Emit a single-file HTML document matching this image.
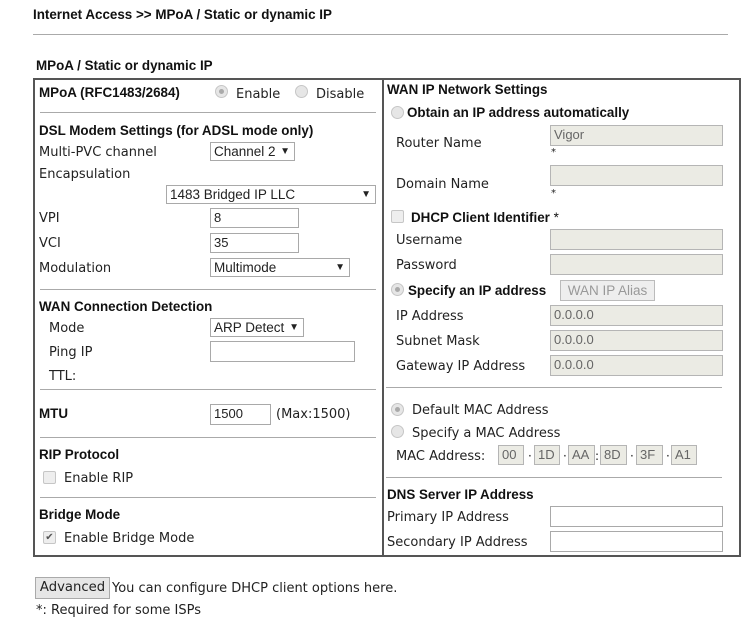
<!DOCTYPE html><html><head><style>
body{margin:0;width:743px;height:627px;background:#fff;position:relative;overflow:hidden;font-family:"DejaVu Sans",Verdana,sans-serif;font-size:12px;color:#222}
div,span{position:absolute;white-space:nowrap;line-height:16px}
div[style*="font-size:13px"]{margin-top:2px}
.b{font-family:"Liberation Sans",Arial,sans-serif;font-weight:bold;font-size:13.4px;color:#111}
.hr{height:1px;background:#aaa;line-height:0}
.in{border:1px solid #a9a9a9;background:#fff;height:18px;line-height:18px;padding-left:3px;box-sizing:border-box;font-size:13px;font-family:"Liberation Sans",Arial,sans-serif}
.g{background:#ebebe4;border-color:#b5b5b5;color:#666}
.sel{border:1px solid #a9a9a9;background:#fff;height:19px;line-height:17px;padding-left:3px;box-sizing:border-box;font-family:"Liberation Sans",Arial,sans-serif;font-size:13.5px}
.sel i{position:absolute;right:4px;top:0;font-style:normal;font-size:10px}
.r{width:11px;height:11px;border-radius:50%;border:1px solid #c6c6c6;background:#e6e6e6}
.r.on::after{content:"";position:absolute;left:3px;top:3px;width:5px;height:5px;border-radius:50%;background:#aaa}
.c{width:11px;height:11px;border:1px solid #c6c6c6;background:#eee;border-radius:2px}
.btn{left:35px;top:577px;width:73px;height:20px;border:1px solid #aaa;background:#e6e6e6;text-align:center;line-height:20px;font-size:13.2px}
</style></head><body>
<div class="b" style="left:33px;top:7px">Internet Access &gt;&gt; MPoA / Static or dynamic IP</div>
<div class="hr" style="left:33px;top:34px;width:695px"></div>
<div class="b" style="left:36px;top:58px">MPoA / Static or dynamic IP</div>
<div style="left:33px;top:78px;width:704px;height:475px;border:2px solid #555"></div>
<div style="left:382px;top:80px;width:2px;height:475px;background:#555"></div>

<div class="b" style="left:39px;top:85px">MPoA (RFC1483/2684)</div>
<div class="r on" style="left:215px;top:85px"></div><div style="left:236px;top:85px;font-size:13px">Enable</div>
<div class="r" style="left:295px;top:85px"></div><div style="left:316px;top:85px;font-size:13px">Disable</div>
<div class="hr" style="left:40px;top:112px;width:336px"></div>
<div class="b" style="left:39px;top:123px">DSL Modem Settings (for ADSL mode only)</div>
<div style="left:39px;top:143px;font-size:13px">Multi-PVC channel</div>
<div class="sel" style="left:210px;top:142px;width:85px">Channel 2<i>▼</i></div>
<div style="left:39px;top:165px;font-size:13px">Encapsulation</div>
<div class="sel" style="left:166px;top:185px;width:210px">1483 Bridged IP LLC<i>▼</i></div>
<div style="left:39px;top:209px;font-size:13px">VPI</div>
<div class="in" style="left:210px;top:208px;width:89px;height:20px">8</div>
<div style="left:39px;top:234px;font-size:13px">VCI</div>
<div class="in" style="left:210px;top:233px;width:89px;height:20px">35</div>
<div style="left:39px;top:259px;font-size:13px">Modulation</div>
<div class="sel" style="left:210px;top:258px;width:140px">Multimode<i>▼</i></div>
<div class="hr" style="left:40px;top:289px;width:336px"></div>
<div class="b" style="left:39px;top:299px">WAN Connection Detection</div>
<div style="left:49px;top:319px;font-size:13px">Mode</div>
<div class="sel" style="left:210px;top:318px;width:94px">ARP Detect<i>▼</i></div>
<div style="left:49px;top:343px;font-size:13px">Ping IP</div>
<div class="in" style="left:210px;top:341px;width:145px;height:21px"></div>
<div style="left:49px;top:367px;font-size:13px">TTL:</div>
<div class="hr" style="left:40px;top:389px;width:336px"></div>
<div class="b" style="left:39px;top:406px">MTU</div>
<div class="in" style="left:210px;top:404px;width:61px;height:21px">1500</div>
<div style="left:276px;top:405px;font-size:13px">(Max:1500)</div>
<div class="hr" style="left:40px;top:437px;width:336px"></div>
<div class="b" style="left:39px;top:447px">RIP Protocol</div>
<div class="c" style="left:43px;top:471px"></div>
<div style="left:64px;top:469px;font-size:13px">Enable RIP</div>
<div class="hr" style="left:40px;top:497px;width:336px"></div>
<div class="b" style="left:39px;top:507px">Bridge Mode</div>
<div class="c" style="left:43px;top:531px;font-size:10px;line-height:11px;text-align:center;color:#555">✔</div>
<div style="left:64px;top:529px;font-size:13px">Enable Bridge Mode</div>

<div class="b" style="left:387px;top:82px">WAN IP Network Settings</div>
<div class="r" style="left:391px;top:106px"></div>
<div class="b" style="left:407px;top:105px">Obtain an IP address automatically</div>
<div style="left:396px;top:134px;font-size:13px">Router Name</div>
<div class="in g" style="left:550px;top:125px;width:173px;height:21px;line-height:17px">Vigor</div>
<div style="left:551px;top:145px;font-size:10px">*</div>
<div style="left:396px;top:175px;font-size:13px">Domain Name</div>
<div class="in g" style="left:550px;top:165px;width:173px;height:21px"></div>
<div style="left:551px;top:186px;font-size:10px">*</div>
<div class="c" style="left:391px;top:210px"></div>
<div class="b" style="left:411px;top:210px">DHCP Client Identifier <span style="position:static;font-weight:normal">*</span></div>
<div style="left:396px;top:231px;font-size:13px">Username</div>
<div class="in g" style="left:550px;top:229px;width:173px;height:21px"></div>
<div style="left:396px;top:256px;font-size:13px">Password</div>
<div class="in g" style="left:550px;top:254px;width:173px;height:21px"></div>
<div class="r on" style="left:391px;top:283px"></div>
<div class="b" style="left:408px;top:283px">Specify an IP address</div>
<div style="left:560px;top:280px;width:93px;height:19px;border:1px solid #bbb;background:#eee;color:#999;font-family:'Liberation Sans',Arial,sans-serif;font-size:13.5px;text-align:center;line-height:19px">WAN IP Alias</div>
<div style="left:396px;top:307px;font-size:13px">IP Address</div>
<div class="in g" style="left:550px;top:305px;width:173px;height:21px">0.0.0.0</div>
<div style="left:396px;top:332px;font-size:13px">Subnet Mask</div>
<div class="in g" style="left:550px;top:330px;width:173px;height:21px">0.0.0.0</div>
<div style="left:396px;top:357px;font-size:13px">Gateway IP Address</div>
<div class="in g" style="left:550px;top:355px;width:173px;height:21px">0.0.0.0</div>
<div class="hr" style="left:386px;top:387px;width:336px"></div>
<div class="r on" style="left:391px;top:403px"></div>
<div style="left:412px;top:401px;font-size:13px">Default MAC Address</div>
<div class="r" style="left:391px;top:425px"></div>
<div style="left:412px;top:424px;font-size:13px">Specify a MAC Address</div>
<div style="left:396px;top:447px;font-size:13px">MAC Address:</div>
<div class="in g" style="left:498px;top:445px;width:26px;height:20px">00</div>
<div style="left:528px;top:448px">·</div>
<div class="in g" style="left:534px;top:445px;width:26px;height:20px">1D</div>
<div style="left:563px;top:448px">·</div>
<div class="in g" style="left:568px;top:445px;width:27px;height:20px">AA</div>
<div style="left:595px;top:448px">:</div>
<div class="in g" style="left:600px;top:445px;width:27px;height:20px">8D</div>
<div style="left:630px;top:448px">·</div>
<div class="in g" style="left:636px;top:445px;width:27px;height:20px">3F</div>
<div style="left:666px;top:448px">·</div>
<div class="in g" style="left:671px;top:445px;width:26px;height:20px">A1</div>
<div class="hr" style="left:386px;top:477px;width:336px"></div>
<div class="b" style="left:387px;top:487px">DNS Server IP Address</div>
<div style="left:387px;top:508px;font-size:13px">Primary IP Address</div>
<div class="in" style="left:550px;top:506px;width:173px;height:21px"></div>
<div style="left:387px;top:533px;font-size:13px">Secondary IP Address</div>
<div class="in" style="left:550px;top:531px;width:173px;height:21px"></div>

<div class="btn">Advanced</div>
<div style="left:112px;top:579px;font-size:13px">You can configure DHCP client options here.</div>
<div style="left:36px;top:601px;font-size:13px">*: Required for some ISPs</div>
</body></html>
